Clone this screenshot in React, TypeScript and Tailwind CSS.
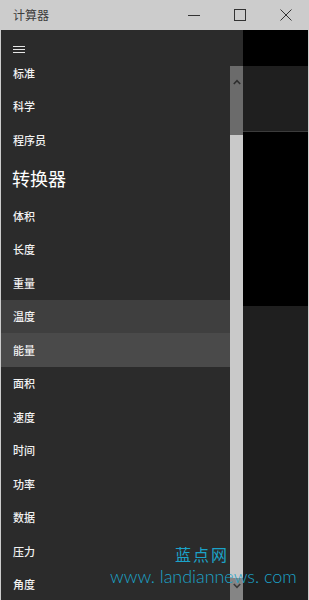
const NAV_TOP = ["标准", "科学", "程序员"];
const CONVERTERS = [
  "体积",
  "长度",
  "重量",
  "温度",
  "能量",
  "面积",
  "速度",
  "时间",
  "功率",
  "数据",
  "压力",
  "角度",
];

const FONT = "font-['Microsoft_YaHei','Noto_Sans_CJK_SC','Noto_Sans',sans-serif]";

function NavItem({ label, tone }: { label: string; tone?: "hover" | "press" }) {
  const bg = tone === "hover" ? "bg-[#3f3f3f]" : tone === "press" ? "bg-[#4a4a4a]" : "";
  return (
    <div className={`flex h-[33.5px] shrink-0 items-center pl-3 text-[11px] font-medium text-[#f2f2f2] ${bg}`}>
      {label}
    </div>
  );
}

function TitleBar() {
  return (
    <div className="flex h-[30px] shrink-0 items-center bg-[#cccccc] text-[#3c3c3c]">
      <span className="ml-[13px] text-[12px] leading-none">计算器</span>
      <div className="ml-auto flex h-full items-center">
        <div className="flex h-full w-[46px] items-center justify-center">
          <div className="h-px w-[12px] bg-[#333333]" />
        </div>
        <div className="flex h-full w-[46px] items-center justify-center">
          <div className="h-[12px] w-[12px] border border-[#333333]" />
        </div>
        <div className="flex h-full w-[46px] items-center justify-center">
          <svg width="12" height="12" viewBox="0 0 12 12" fill="none" stroke="#333333" strokeWidth="1">
            <path d="M0.5 0.5 L11.5 11.5 M11.5 0.5 L0.5 11.5" />
          </svg>
        </div>
      </div>
    </div>
  );
}

function Scrollbar() {
  return (
    <div className="flex w-[13px] shrink-0 flex-col bg-[#2b2b2b]">
      <div className="h-[36px] shrink-0" />
      <div className="flex h-[69px] shrink-0 justify-center bg-[#6b6b6b] pt-[13px]">
        <svg width="8" height="6" viewBox="0 0 8 6" fill="none" stroke="#2e2e2e" strokeWidth="1.6">
          <path d="M0.8 5 L4 1.6 L7.2 5" />
        </svg>
      </div>
      <div className="flex-1 bg-[#c9c9c9]" />
      <div className="flex h-[22px] shrink-0 justify-center bg-[#858585] pt-[5px]">
        <svg width="8" height="6" viewBox="0 0 8 6" fill="none" stroke="#3a3a3a" strokeWidth="1.6">
          <path d="M0.8 1 L4 4.4 L7.2 1" />
        </svg>
      </div>
    </div>
  );
}

export default function App() {
  return (
    <div className={`relative flex h-[600px] w-[309px] flex-col overflow-hidden bg-[#cccccc] ${FONT}`}>
      <TitleBar />
      <div className="mx-px flex min-h-0 flex-1">
        <nav className="flex w-[229px] shrink-0 flex-col overflow-hidden bg-[#2b2b2b]">
          <div className="flex h-[26px] shrink-0 flex-col justify-end gap-[2px] pb-[3px] pl-3">
            <div className="h-px w-[12px] bg-[#e6e6e6]" />
            <div className="h-px w-[12px] bg-[#e6e6e6]" />
            <div className="h-px w-[12px] bg-[#e6e6e6]" />
          </div>
          {NAV_TOP.map((label) => (
            <NavItem key={label} label={label} />
          ))}
          <div className="flex h-[42.5px] shrink-0 items-center pl-[11px] text-[18px] leading-none text-white">
            转换器
          </div>
          {CONVERTERS.map((label) => (
            <NavItem
              key={label}
              label={label}
              tone={label === "温度" ? "hover" : label === "能量" ? "press" : undefined}
            />
          ))}
        </nav>
        <Scrollbar />
        <div className="flex flex-1 flex-col">
          <div className="h-[36px] shrink-0 bg-black" />
          <div className="h-[66px] shrink-0 border-b border-[#3c3c3c] bg-[#1f1f1f]" />
          <div className="h-[174px] shrink-0 bg-black" />
          <div className="flex-1 bg-[#1f1f1f]" />
        </div>
      </div>

      {/* watermark */}
      <div className="pointer-events-none absolute left-[175px] top-[546px] whitespace-nowrap text-[16px] leading-[16px] tracking-[2px] text-[#1ba3c9]">
        蓝点网
      </div>
      <div className="pointer-events-none absolute left-[110px] top-[567px] whitespace-nowrap font-['Lato',sans-serif] text-[18px] font-light leading-none tracking-[-0.05px] text-[#1ba3c9]">
        www. landiannews. com
      </div>
    </div>
  );
}
